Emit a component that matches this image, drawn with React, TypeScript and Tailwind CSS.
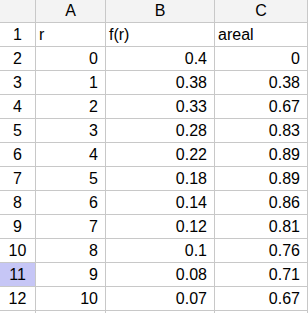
const rows: [string, string, string][] = [
  ["r", "f(r)", "areal"],
  ["0", "0.4", "0"],
  ["1", "0.38", "0.38"],
  ["2", "0.33", "0.67"],
  ["3", "0.28", "0.83"],
  ["4", "0.22", "0.89"],
  ["5", "0.18", "0.89"],
  ["6", "0.14", "0.86"],
  ["7", "0.12", "0.81"],
  ["8", "0.1", "0.76"],
  ["9", "0.08", "0.71"],
  ["10", "0.07", "0.67"],
  ["", "", ""],
];

const cell = "border-r border-b border-[#c8c8c8] flex items-center";

export default function App() {
  return (
    <div
      className="w-[308px] h-[313px] overflow-hidden bg-white text-[16px] text-black"
      style={{ fontFamily: '"Liberation Sans", Arial, sans-serif' }}
    >
      <div className="flex h-[23px] bg-[#f3f3f3]">
        <div className={`${cell} w-[36px]`} />
        <div className={`${cell} w-[70px] justify-center`}>A</div>
        <div className={`${cell} w-[109px] justify-center`}>B</div>
        <div className={`${cell} w-[93px] justify-center`}>C</div>
      </div>
      {rows.map((r, i) => {
        const first = i === 0;
        const align = first ? "justify-start pl-[3px]" : "justify-end pr-[7px]";
        return (
          <div key={i} className="flex h-[24px]">
            <div
              className={`${cell} w-[36px] justify-center ${
                i === 10 ? "bg-[#c6c6f6]" : "bg-white"
              }`}
            >
              {i < 12 ? i + 1 : ""}
            </div>
            <div className={`${cell} w-[70px] ${align}`}>{r[0]}</div>
            <div className={`${cell} w-[109px] ${align}`}>{r[1]}</div>
            <div className={`${cell} w-[93px] ${align}`}>{r[2]}</div>
          </div>
        );
      })}
    </div>
  );
}
